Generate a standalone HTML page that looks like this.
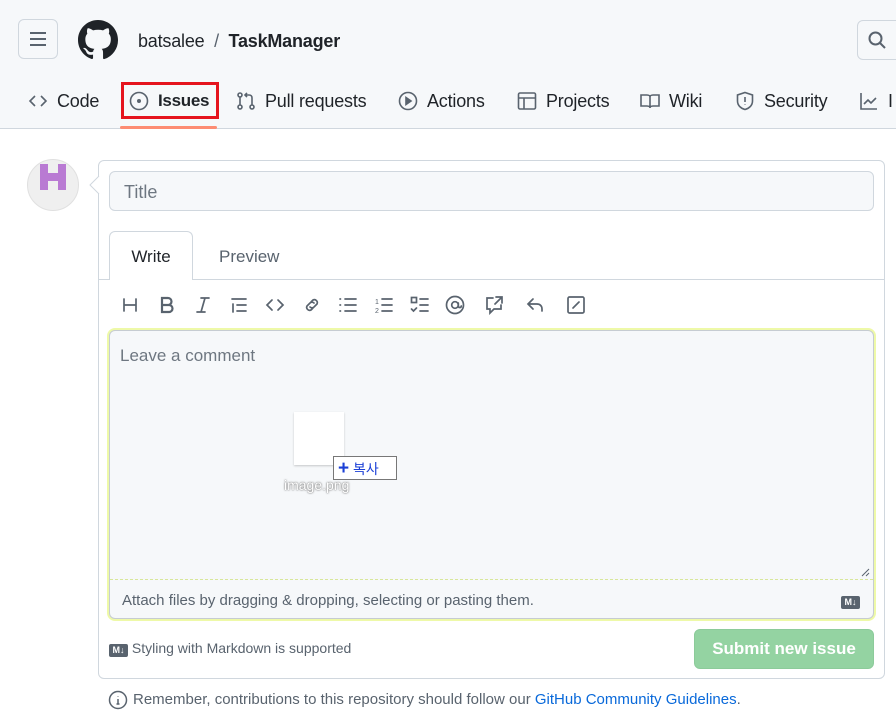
<!DOCTYPE html>
<html><head><meta charset="utf-8"><style>
*{box-sizing:border-box;margin:0;padding:0}
body{width:896px;height:725px;overflow:hidden;background:#fff;font-family:"Liberation Sans","Noto Sans CJK KR",sans-serif;color:#1f2328;position:relative}
.hdr{position:absolute;left:0;top:0;width:896px;height:129px;background:#f6f8fa;border-bottom:1px solid #d0d7de}
.abs{position:absolute}
.btn{position:absolute;border:1px solid #d0d7de;border-radius:6px;background:#f6f8fa}
.nav{position:absolute;top:89px;font-size:18px;color:#1f2328;display:flex;align-items:center;gap:9px;height:24px;letter-spacing:-0.2px}
.nav svg{width:20px;height:20px;fill:none;stroke:#59636e;stroke-width:1.6}
.tb svg{position:absolute;top:295px;width:20px;height:20px;fill:none;stroke:#59636e;stroke-width:1.7;stroke-linecap:round}
.md{display:inline-block;width:19px;height:13px;background:#59636e;border-radius:2px;color:#fff;font-size:9px;font-weight:bold;line-height:13px;text-align:center}
</style></head><body>
<div class="hdr">
 <div class="btn" style="left:18px;top:19px;width:40px;height:40px">
  <svg class="abs" style="left:9px;top:9px" width="20" height="20"><path d="M2 4h16M2 10h16M2 16h16" stroke="#59636e" stroke-width="2"/></svg></div>
 <svg class="abs" style="left:78px;top:20px" width="40" height="40" viewBox="0 0 16 16"><path fill="#1f2328" d="M8 0C3.58 0 0 3.58 0 8c0 3.540 2.29 6.53 5.47 7.59.4.07.55-.17.55-.38v-1.34c-2.23.49-2.690-1.07-2.690-1.07-.36-.92-.89-1.17-.89-1.17-.73-.5.06-.49.06-.49.8.06 1.230.83 1.230.83.71 1.220 1.870.87 2.330.66.07-.52.28-.87.51-1.07-1.780-.2-3.640-.89-3.640-3.950 0-.87.31-1.590.82-2.150-.08-.2-.36-1.020.08-2.120 0 0 .67-.21 2.2.82a7.6 7.6 0 014 0c1.53-1.040 2.2-.82 2.2-.82.44 1.1.16 1.920.08 2.120.51.56.82 1.270.82 2.150 0 3.070-1.870 3.750-3.650 3.950.29.25.54.73.54 1.480v2.2c0 .21.15.46.55.38A8.01 8.01 0 0016 8c0-4.420-3.580-8-8-8z"/></svg>
 <div class="abs" style="left:138px;top:31px;font-size:18px;color:#1f2328;letter-spacing:-0.2px">batsalee&nbsp; <span style="color:#59636e">/</span> &nbsp;<b>TaskManager</b></div>
 <div class="btn" style="left:857px;top:20px;width:50px;height:40px">
  <svg class="abs" style="left:9px;top:9px" width="20" height="20" fill="none" stroke="#59636e" stroke-width="2"><circle cx="8.5" cy="8.5" r="6"/><path d="M13 13l5 5"/></svg></div>
 <div class="nav" style="left:28px"><svg><path d="M7 5L2 10l5 5M13 5l5 5-5 5"/></svg>Code</div>
 <div class="abs" style="left:121px;top:82px;width:98px;height:37px;border:3px solid #e5141e"></div>
 <div class="nav" style="left:129px"><svg><circle cx="10" cy="10" r="8.5"/><circle cx="10" cy="10" r="1.2" fill="#59636e"/></svg><b style="font-size:17px;letter-spacing:-0.3px">Issues</b></div>
 <div class="abs" style="left:120px;top:126px;width:97px;height:3px;background:#fd8c73;border-radius:2px"></div>
 <div class="nav" style="left:236px"><svg><circle cx="4" cy="4" r="2"/><circle cx="4" cy="16" r="2"/><circle cx="16" cy="16" r="2"/><path d="M4 6v8M16 14V7c0-2-1-3-3-3H9M11 2L9 4l2 2"/></svg>Pull requests</div>
 <div class="nav" style="left:398px"><svg><circle cx="10" cy="10" r="8.5"/><path d="M8 6.5v7l5-3.5z" fill="#59636e"/></svg>Actions</div>
 <div class="nav" style="left:517px"><svg><rect x="1.5" y="2" width="17" height="16" rx="1.5"/><path d="M1.5 7h17M7 7v11"/></svg>Projects</div>
 <div class="nav" style="left:640px"><svg><path d="M1 4h6c2 0 3 1 3 2v11c0-1-1-2-3-2H1zM19 4h-6c-2 0-3 1-3 2v11c0-1 1-2 3-2h6z"/></svg>Wiki</div>
 <div class="nav" style="left:735px"><svg><path d="M10 1.5l7.5 2.5v6c0 4.5-3.5 7.5-7.5 8.5C6 17.5 2.5 14.5 2.5 10V4z"/><path d="M10 6v5M10 13.5v.5"/></svg>Security</div>
 <div class="nav" style="left:859px"><svg><path d="M2 2v16h16M5 13l4-4 3 3 5-5"/></svg>I</div>
</div>
<div class="abs" style="left:27px;top:159px;width:52px;height:52px;border-radius:50%;background:#efefef;border:1px solid #e0e0e0"></div>
<svg class="abs" style="left:40px;top:164px" width="26" height="26"><path fill="#b97ad3" d="M0 0h8v9h10V0h8v26h-8v-9H8v9H0z"/></svg>
<div class="abs" style="left:98px;top:160px;width:787px;height:519px;border:1px solid #d0d7de;border-radius:6px"></div>
<svg class="abs" style="left:89px;top:176px" width="11" height="18"><path d="M10 0L1 9l9 9" fill="#fff" stroke="#d0d7de"/></svg>
<div class="abs" style="left:109px;top:171px;width:765px;height:40px;border:1px solid #d0d7de;border-radius:6px;background:#f6f8fa;font-size:18px;color:#6e7781;padding:10px 14px">Title</div>
<div class="abs" style="left:98px;top:279px;width:786px;height:1px;background:#d0d7de"></div>
<div class="abs" style="left:109px;top:231px;width:84px;height:49px;border:1px solid #d0d7de;border-bottom:none;border-radius:6px 6px 0 0;background:#fff;font-size:17px;text-align:center;padding-top:15px">Write</div>
<div class="abs" style="left:219px;top:247px;font-size:17px;color:#59636e">Preview</div>
<div class="tb">
<svg style="left:120px"><path d="M4 4v12M16 4v12M4 10h12"/></svg>
<svg style="left:157px"><path d="M5 3h6a3.5 3.5 0 010 7H5zM5 10h7a3.5 3.5 0 010 7H5z" stroke-width="2.2"/></svg>
<svg style="left:193px"><path d="M8 3h8M4 17h8M12 3L8 17"/></svg>
<svg style="left:229px"><path d="M3 4h14M8 10h9M8 16h9M4 9v8"/></svg>
<svg style="left:265px"><path d="M7 5L2 10l5 5M13 5l5 5-5 5"/></svg>
<svg style="left:302px"><path d="M9 7l2-2a3 3 0 014 4l-3 3a3 3 0 01-4 0M11 13l-2 2a3 3 0 01-4-4l3-3a3 3 0 014 0"/></svg>
<svg style="left:338px"><path d="M7 4h11M7 10h11M7 16h11M2 4h.5M2 10h.5M2 16h.5"/></svg>
<svg style="left:374px"><path d="M8 4h10M8 10h10M8 16h10" /><text x="1" y="9" font-size="7" fill="#59636e" stroke="none">1</text><text x="1" y="18" font-size="7" fill="#59636e" stroke="none">2</text></svg>
<svg style="left:410px"><rect x="1.5" y="2.5" width="5" height="5"/><path d="M10 4h8M10 10h8M10 16h8M1.5 14l2 2 3-3"/></svg>
<svg style="left:445px"><circle cx="10" cy="10" r="8.5"/><circle cx="10" cy="10" r="3.3"/><path d="M13.3 8v3c0 2 3 2 3 0"/></svg>
<svg style="left:484px"><path d="M9 3H3v11h3v4l4-4h7v-4M12 2h6v6M18 2l-7 7"/></svg>
<svg style="left:525px"><path d="M8 4L3 9l5 5M3 9h9c3 0 5 2 5 5v2"/></svg>
<svg style="left:566px"><rect x="2" y="2" width="16" height="16" rx="1.5"/><path d="M7 13l6-6"/></svg>
</div>
<div class="abs" style="left:109px;top:330px;width:765px;height:289px;border:1px solid #c6ccd2;border-radius:6px;background:#f6f8fa;box-shadow:0 0 0 2px #eef9a8"></div>
<div class="abs" style="left:120px;top:346px;font-size:17px;color:#6e7781">Leave a comment</div>
<svg class="abs" style="left:859px;top:566px" width="12" height="12"><path d="M3 10l7-7M7 10l3-3" stroke="#59636e"/></svg>
<div class="abs" style="left:110px;top:579px;width:763px;border-top:1px dashed #d8e79a"></div>
<div class="abs" style="left:122px;top:592px;font-size:15px;color:#59636e">Attach files by dragging &amp; dropping, selecting or pasting them.</div>
<div class="abs" style="left:841px;top:592px"><span class="md">M↓</span></div>
<div class="abs" style="left:294px;top:412px;width:50px;height:53px;background:#fff;box-shadow:0 1px 2px rgba(0,0,0,.2)"></div>
<div class="abs" style="left:284px;top:477px;font-size:14px;color:#fff;text-shadow:0 0 2px #777,0 0 1px #777">image.png</div>
<div class="abs" style="left:333px;top:456px;width:64px;height:24px;border:1px solid #777;background:#fff;font-size:14px;color:#1a3fd6;padding:2px 4px;white-space:nowrap"><b style="font-size:19px;line-height:16px">+</b> 복사</div>
<div class="abs" style="left:109px;top:640px;font-size:14px;color:#59636e"><span class="md">M↓</span> Styling with Markdown is supported</div>
<div class="abs" style="left:694px;top:629px;width:180px;height:40px;border-radius:6px;background:#94d3a2;border:1px solid #8ccb9a;color:#fff;font-size:17px;font-weight:bold;text-align:center;line-height:38px">Submit new issue</div>
<svg class="abs" style="left:108px;top:690px" width="20" height="20" fill="none" stroke="#59636e" stroke-width="1.5"><circle cx="10" cy="10" r="8.5"/><path d="M10 9v5M8.5 14h3M10 6v.5"/></svg>
<div class="abs" style="left:133px;top:691px;font-size:15px;color:#59636e">Remember, contributions to this repository should follow our <span style="color:#0969da">GitHub Community Guidelines</span>.</div>
</body></html>
